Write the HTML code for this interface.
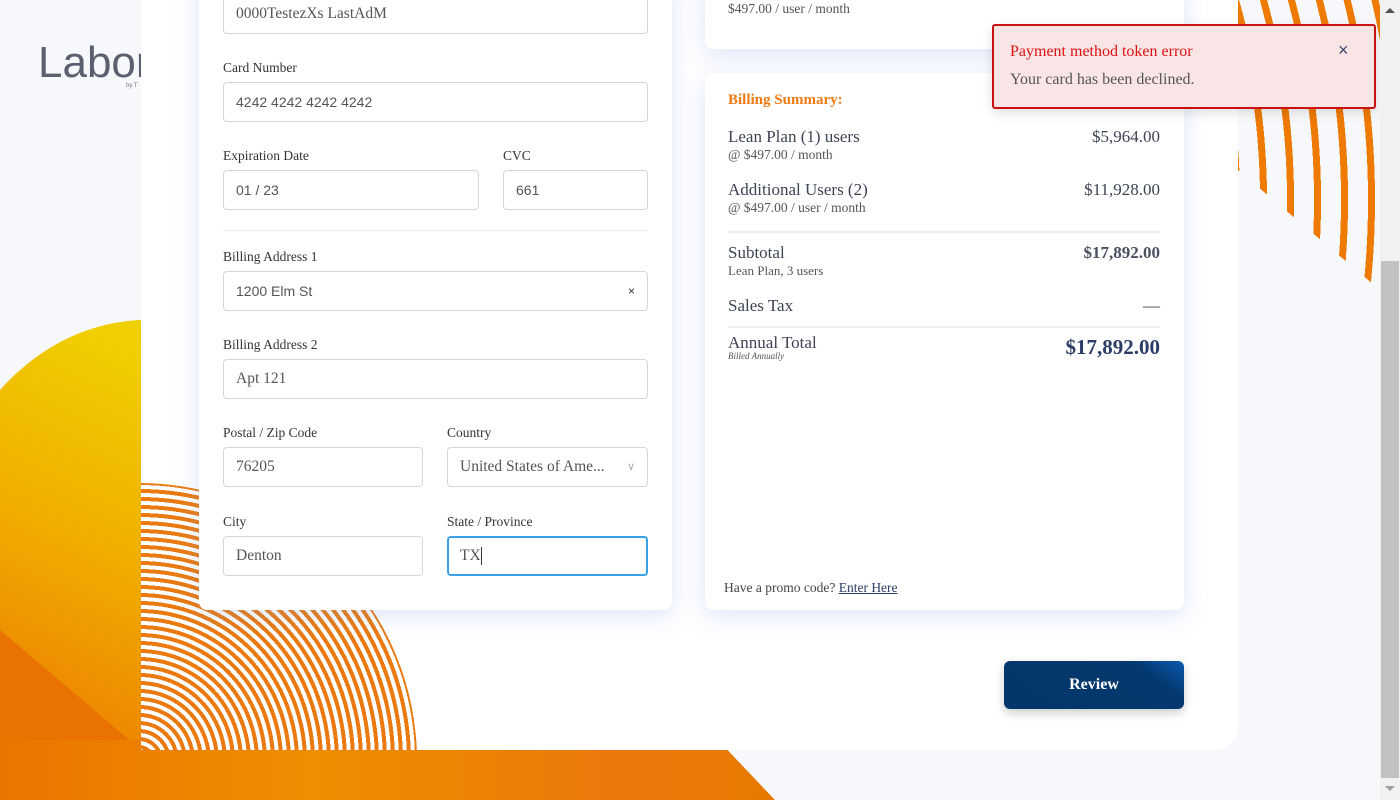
<!DOCTYPE html>
<html><head><meta charset="utf-8"><style>
*{box-sizing:border-box;margin:0;padding:0}
html,body{width:1400px;height:800px;overflow:hidden}
body{background:#f6f8fb;position:relative;font-family:"Liberation Serif",serif;color:#3d4452}
.abs{position:absolute}
.lbl{position:absolute;font-size:13.5px;color:#333}
.inp{position:absolute;height:40px;border:1px solid #d6d6d6;border-radius:4px;background:#fff;font-size:15.5px;color:#555;padding-left:12px;line-height:38px;white-space:nowrap;overflow:hidden}
.sans{font-family:"Liberation Sans",sans-serif;font-size:14px}
.row{position:absolute;left:728px;width:432px}
.r{position:absolute;right:0;top:0}
</style></head><body>
<!-- left blob -->
<svg class="abs" style="left:0;top:300px" width="300" height="500" viewBox="0 0 300 500">
<defs><linearGradient id="g1" x1="0.3" y1="0" x2="0" y2="1"><stop offset="0" stop-color="#f0d000"/><stop offset="0.4" stop-color="#f0b000"/><stop offset="0.75" stop-color="#ee8a00"/><stop offset="1" stop-color="#ea7000"/></linearGradient></defs>
<path d="M0,90 C40,45 90,22 141,20 L300,20 L300,500 L0,500Z" fill="url(#g1)"/>
<path d="M0,330 L141,450 L141,500 L0,500Z" fill="#e97200"/>
</svg>
<!-- bottom strip -->
<div class="abs" style="left:0;top:740px;width:780px;height:60px;background:linear-gradient(90deg,#ea7400,#ee8e00 40%,#e9780a 80%,#e67a00);clip-path:polygon(0 0,718px 0,775px 60px,0 60px)"></div>
<!-- right arcs -->
<div class="abs" style="left:1238px;top:0;width:142px;height:290px;background:repeating-radial-gradient(circle at -700px 200px,transparent 0 20px,#ee7a00 20px 27px);clip-path:polygon(0 0,100% 0,100% 290px,0 170px)"></div>
<!-- main panel -->
<div class="abs" style="left:141px;top:0;width:1097px;height:750px;background:#fff;border-bottom-right-radius:22px;overflow:hidden">
  <div class="abs" style="left:-280px;top:483px;width:556px;height:556px;border-radius:50%;background:repeating-radial-gradient(circle at 50% 50%,#fff 0 4px,#ea7a10 4px 8px)"></div>
</div>
<!-- logo -->
<div class="abs" style="left:38px;top:38px;font-family:'Liberation Sans',sans-serif;font-size:44px;color:#5a6070;font-weight:300;width:103px;overflow:hidden;white-space:nowrap">Labor</div>
<div class="abs" style="left:126px;top:83px;font-family:'Liberation Sans',sans-serif;font-size:6px;color:#777">by T</div>
<!-- left card -->
<div class="abs" style="left:199px;top:-20px;width:473px;height:630px;background:#fff;border-radius:8px;box-shadow:0 6px 24px rgba(120,150,230,.25)"></div>
<div class="inp" style="left:223px;top:-6px;width:425px;height:40px">0000TestezXs LastAdM</div>
<div class="lbl" style="left:223px;top:60px">Card Number</div>
<div class="inp sans" style="left:223px;top:82px;width:425px">4242 4242 4242 4242</div>
<div class="lbl" style="left:223px;top:148px">Expiration Date</div>
<div class="inp sans" style="left:223px;top:170px;width:256px">01 / 23</div>
<div class="lbl" style="left:503px;top:148px">CVC</div>
<div class="inp sans" style="left:503px;top:170px;width:145px">661</div>
<div class="abs" style="left:223px;top:230px;width:425px;height:1px;background:#eee"></div>
<div class="lbl" style="left:223px;top:249px">Billing Address 1</div>
<div class="inp sans" style="left:223px;top:271px;width:425px">1200 Elm St<span style="position:absolute;right:12px;font-size:12px;color:#333">×</span></div>
<div class="lbl" style="left:223px;top:337px">Billing Address 2</div>
<div class="inp" style="left:223px;top:359px;width:425px">Apt 121</div>
<div class="lbl" style="left:223px;top:425px">Postal / Zip Code</div>
<div class="inp" style="left:223px;top:447px;width:200px">76205</div>
<div class="lbl" style="left:447px;top:425px">Country</div>
<div class="inp" style="left:447px;top:447px;width:201px">United States of Ame...<span style="position:absolute;right:12px;font-size:11px;color:#aaa;font-family:'Liberation Sans',sans-serif">∨</span></div>
<div class="lbl" style="left:223px;top:514px">City</div>
<div class="inp" style="left:223px;top:536px;width:200px">Denton</div>
<div class="lbl" style="left:447px;top:514px">State / Province</div>
<div class="inp" style="left:447px;top:536px;width:201px;border:2px solid #3aa0e8;padding-left:11px;line-height:36px">TX<span style="display:inline-block;width:1px;height:18px;background:#333;vertical-align:middle"></span></div>
<!-- right top card -->
<div class="abs" style="left:705px;top:-20px;width:479px;height:69px;background:#fff;border-radius:8px;box-shadow:0 6px 24px rgba(120,150,230,.25)"></div>
<div class="abs" style="left:728px;top:1px;font-size:13.5px;color:#555">$497.00 / user / month</div>
<!-- right card -->
<div class="abs" style="left:705px;top:73px;width:479px;height:537px;background:#fff;border-radius:8px;box-shadow:0 6px 24px rgba(120,150,230,.25)"></div>
<div class="abs" style="left:728px;top:92px;font-size:15px;font-weight:bold;color:#ee7a10">Billing Summary:</div>
<div class="row" style="top:127px"><div style="font-size:17px">Lean Plan (1) users</div><div style="font-size:13.5px;color:#555">@ $497.00 / month</div><div class="r" style="font-size:17px">$5,964.00</div></div>
<div class="row" style="top:180px"><div style="font-size:17px">Additional Users (2)</div><div style="font-size:13.5px;color:#555">@ $497.00 / user / month</div><div class="r" style="font-size:17px">$11,928.00</div></div>
<div class="abs" style="left:728px;top:231px;width:432px;height:2px;background:#eee"></div>
<div class="row" style="top:243px"><div style="font-size:17px">Subtotal</div><div style="font-size:13px;color:#555">Lean Plan, 3 users</div><div class="r" style="font-size:17px;font-weight:bold;color:#4a5060">$17,892.00</div></div>
<div class="row" style="top:296px"><div style="font-size:17px">Sales Tax</div><div class="r" style="font-size:17px">—</div></div>
<div class="abs" style="left:728px;top:326px;width:432px;height:2px;background:#eee"></div>
<div class="row" style="top:333px"><div style="font-size:17px">Annual Total</div><div style="font-size:9px;font-style:italic;color:#555;margin-top:-2px">Billed Annually</div><div class="r" style="font-size:21px;font-weight:bold;color:#2b3d66;top:2px">$17,892.00</div></div>
<div class="abs" style="left:724px;top:580px;font-size:13.5px;color:#444">Have a promo code? <span style="text-decoration:underline;color:#2b3d66">Enter Here</span></div>
<!-- review -->
<div class="abs" style="left:1004px;top:661px;width:180px;height:48px;border-radius:6px;background:linear-gradient(215deg,#0a5ab0 0%,#04386e 22%,#03376b 100%);box-shadow:0 4px 10px rgba(0,0,0,.2);color:#fff;font-weight:bold;font-size:16px;text-align:center;line-height:48px">Review</div>
<!-- toast -->
<div class="abs" style="left:992px;top:24px;width:384px;height:85px;background:#f9e5e6;border:2px solid #cc1111;border-radius:3px;box-shadow:0 4px 12px rgba(0,0,0,.12)">
  <div class="abs" style="left:16px;top:17px;font-size:16px;color:#dd1111">Payment method token error</div>
  <div class="abs" style="left:16px;top:45px;font-size:16px;color:#555">Your card has been declined.</div>
  <div class="abs" style="left:344px;top:14px;font-size:18px;color:#3d4a70;font-family:'Liberation Sans',sans-serif">×</div>
</div>
<!-- scrollbar -->
<div class="abs" style="left:1380px;top:0;width:20px;height:800px;background:#f1f1f1"></div>
<div class="abs" style="left:1381px;top:261px;width:18px;height:517px;background:#c1c1c1"></div>
<div class="abs" style="left:1385px;top:8px;width:0;height:0;border-left:5px solid transparent;border-right:5px solid transparent;border-bottom:5px solid #505050"></div>
<div class="abs" style="left:1385px;top:786px;width:0;height:0;border-left:5px solid transparent;border-right:5px solid transparent;border-top:5px solid #a0a0a0"></div>
</body></html>
